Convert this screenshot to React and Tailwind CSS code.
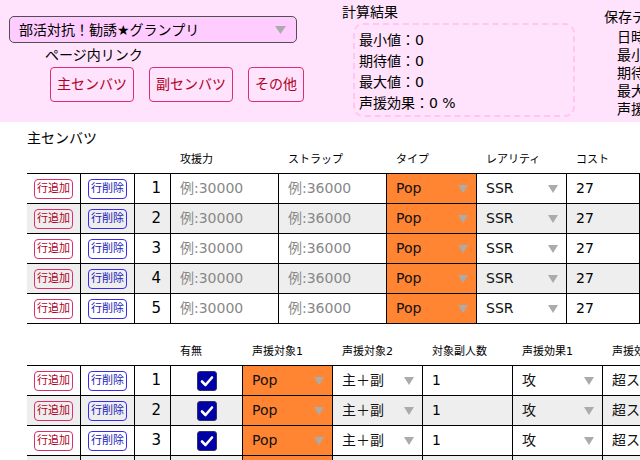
import React from 'react';

const rows1 = [1, 2, 3, 4, 5];
const rows2 = [1, 2, 3, 4];

const Tri = () => (
  <svg width="10" height="8" viewBox="0 0 10 8" className="shrink-0">
    <polygon points="0,0 10,0 5,8" fill="#ababab" />
  </svg>
);

const SelectCell = ({ value, orange }) => (
  <div className={`border-r border-black flex items-center justify-between pl-[9px] pr-[8px] ${orange ? 'bg-[#ff8533]' : ''}`}>
    <span className="whitespace-nowrap text-[#111]">{value}</span>
    <Tri />
  </div>
);

const RowButtons = ({ n }) => (
  <>
    <div className="border-r border-black flex items-center justify-center">
      <button className="border border-[#d8306f] rounded-[4px] text-[#b0001f] text-[11px] leading-[18px] px-[2px] whitespace-nowrap">
        行追加
      </button>
    </div>
    <div className="border-r border-black flex items-center justify-center">
      <button className="border border-[#3a2bf0] rounded-[4px] text-[#2020b8] text-[11px] leading-[18px] px-[2px] whitespace-nowrap">
        行削除
      </button>
    </div>
    <div className="border-r border-black flex items-center justify-end pr-[9px] text-[15px]">{n}</div>
  </>
);

const Check = () => (
  <div className="w-[20px] h-[20px] rounded-[3px] bg-[#0000a6] border border-[#30306a] flex items-center justify-center">
    <svg width="14" height="12" viewBox="0 0 14 12">
      <polyline points="2,6.5 5.5,10 12,2.5" fill="none" stroke="#fff" strokeWidth="2.6" strokeLinecap="round" strokeLinejoin="round" />
    </svg>
  </div>
);

export default function App() {
  return (
    <div className="w-[640px] h-[460px] overflow-hidden bg-white text-black font-['DejaVu_Sans','Noto_Sans_CJK_JP',sans-serif]">
      {/* Header */}
      <div className="h-[122px] bg-[#ffe2fb] flex overflow-hidden">
        <div className="w-[342px] shrink-0 pl-[9px] pt-[16px]">
          <div className="w-[288px] h-[27px] border border-[#505050] rounded-[5px] bg-[#ffccff] flex items-center justify-between pl-[9px] pr-[10px]">
            <span className="text-[14px] leading-[16px] whitespace-nowrap">部活対抗！勧誘★グランプリ</span>
            <svg width="11" height="8" viewBox="0 0 11 8">
              <polygon points="0,0 11,0 5.5,8" fill="#ababab" />
            </svg>
          </div>
          <div className="pl-[36px] mt-[3px] text-[14px] leading-[18px]">ページ内リンク</div>
          <div className="flex gap-[15px] pl-[41px] mt-[3px]">
            {['主センバツ', '副センバツ', 'その他'].map((t) => (
              <button key={t} className="h-[35px] border border-[#d8306f] rounded-[4px] px-[6px] text-[14px] text-[#b0001f] whitespace-nowrap">
                {t}
              </button>
            ))}
          </div>
        </div>

        <div className="w-[262px] shrink-0 pt-[4px]">
          <div className="text-[14px] leading-[16px]">計算結果</div>
          <div className="ml-[11px] mt-[3px] w-[222px] h-[94px] border-2 border-dashed border-[#ffc6f2] rounded-[10px] pl-[4px] pt-[5px] text-[14px] leading-[21px]">
            <div>最小値：0</div>
            <div>期待値：0</div>
            <div>最大値：0</div>
            <div>声援効果：0 %</div>
          </div>
        </div>

        <div className="shrink-0 pt-[9px] whitespace-nowrap">
          <div className="text-[14px] leading-[16px]">保存データ</div>
          <div className="pl-[13px] mt-[3px] text-[14px] leading-[18px]">
            <div>日時：</div>
            <div>最小値：0</div>
            <div>期待値：0</div>
            <div>最大値：0</div>
            <div>声援効果：0 %</div>
          </div>
        </div>
      </div>

      {/* Main members */}
      <div className="pl-[27px]">
        <div className="pt-[6px] text-[14px] leading-[20px]">主センバツ</div>

        <div className="grid grid-cols-[54px_54px_36px_108px_108px_90px_90px_73px] h-[25px] text-[11px] leading-[14px] w-max">
          <div />
          <div />
          <div />
          {['攻援力', 'ストラップ', 'タイプ', 'レアリティ', 'コスト'].map((h) => (
            <div key={h} className="pl-[9px] pt-[5px] whitespace-nowrap">{h}</div>
          ))}
        </div>

        <div className="border-t border-black w-max text-[14px]">
          {rows1.map((n) => (
            <div
              key={n}
              className={`grid grid-cols-[54px_54px_36px_108px_108px_90px_90px_73px] h-[30px] border-b border-black ${n % 2 === 0 ? 'bg-[#eeeeee]' : 'bg-white'}`}
            >
              <RowButtons n={n} />
              <div className="border-r border-black flex items-center pl-[9px] text-[#888888]">例:30000</div>
              <div className="border-r border-black flex items-center pl-[9px] text-[#888888]">例:36000</div>
              <SelectCell value="Pop" orange />
              <SelectCell value="SSR" />
              <div className="border-r border-black flex items-center pl-[9px]">27</div>
            </div>
          ))}
        </div>

        {/* Support members */}
        <div className="mt-[16px] grid grid-cols-[54px_54px_36px_72px_90px_90px_90px_90px_90px] h-[25px] text-[11px] leading-[14px] w-max">
          <div />
          <div />
          <div />
          {['有無', '声援対象1', '声援対象2', '対象副人数', '声援効果1', '声援効果2'].map((h) => (
            <div key={h} className="pl-[9px] pt-[5px] whitespace-nowrap">{h}</div>
          ))}
        </div>

        <div className="border-t border-black w-max text-[14px]">
          {rows2.map((n) => (
            <div
              key={n}
              className={`grid grid-cols-[54px_54px_36px_72px_90px_90px_90px_90px_90px] h-[30px] border-b border-black ${n % 2 === 0 ? 'bg-[#eeeeee]' : 'bg-white'}`}
            >
              <RowButtons n={n} />
              <div className="border-r border-black flex items-center justify-center">
                <Check />
              </div>
              <SelectCell value="Pop" orange />
              <SelectCell value="主＋副" />
              <div className="border-r border-black flex items-center pl-[9px]">1</div>
              <SelectCell value="攻" />
              <SelectCell value="超スコアアップ" />
            </div>
          ))}
        </div>
      </div>
    </div>
  );
}
